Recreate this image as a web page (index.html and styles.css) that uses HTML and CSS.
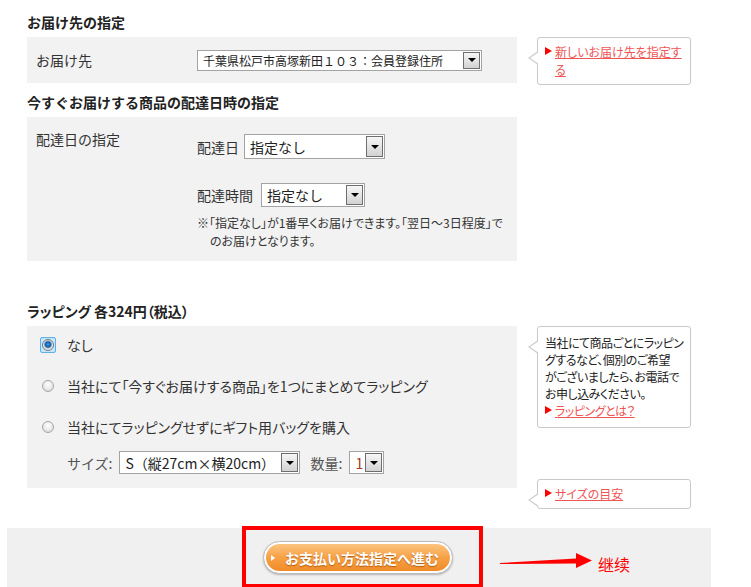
FILE: index.html
```html
<!DOCTYPE html>
<html lang="ja">
<head>
    <meta charset="UTF-8">
    <meta name="viewport" content="width=device-width, initial-scale=1.0">
    <title>お届け先の指定</title>
    <link rel="stylesheet" href="styles.css">
</head>
<body>
    <div class="page">
        <h2 class="ttl">お届け先の指定</h2>
        <div class="row">
            <div class="box box-addr">
                <div class="lbl">お届け先</div>
                <div class="sel sel-addr"><span class="val">千葉県松戸市高塚新田１０３：会員登録住所</span><span class="btn"></span></div>
            </div>
            <div class="side">
                <div class="tip">
                    <div class="tip-link"><i class="mk"></i><a href="#">新しいお届け先を指定す<br>る</a></div>
                </div>
            </div>
        </div>

        <h2 class="ttl ttl-date">今すぐお届けする商品の配達日時の指定</h2>
        <div class="row">
            <div class="box box-date">
                <div class="lbl">配達日の指定</div>
                <div class="fields">
                    <div class="field">
                        <span class="name">配達日</span>
                        <div class="sel sel-day"><span class="val">指定なし</span><span class="btn"></span></div>
                    </div>
                    <div class="field">
                        <span class="name">配達時間</span>
                        <div class="sel sel-time"><span class="val">指定なし</span><span class="btn"></span></div>
                    </div>
                    <p class="note">※「指定なし」が1番早くお届けできます。「翌日〜3日程度」で<br>のお届けとなります。</p>
                </div>
            </div>
        </div>

        <h2 class="ttl ttl-wrap">ラッピング 各324円（税込）</h2>
        <div class="row">
            <div class="box box-wrap">
                <label class="opt"><span class="mark on"><input type="radio" name="wrap" checked></span>なし</label>
                <label class="opt"><span class="mark"><input type="radio" name="wrap"></span>当社にて「今すぐお届けする商品」を1つにまとめてラッピング</label>
                <label class="opt"><span class="mark"><input type="radio" name="wrap"></span>当社にてラッピングせずにギフト用バッグを購入</label>
                <div class="size-row">
                    <span class="name">サイズ:</span>
                    <div class="sel sel-size"><span class="val">S（縦27cm×横20cm）</span><span class="btn"></span></div>
                    <span class="name name-qty">数量:</span>
                    <div class="sel sel-qty"><span class="val">1</span><span class="btn"></span></div>
                </div>
            </div>
            <div class="side">
                <div class="tip tip-note">
                    当社にて商品ごとにラッピン<br>グするなど、個別のご希望<br>がございましたら、お電話で<br>お申し込みください。
                    <div class="tip-link"><i class="mk"></i><a href="#">ラッピングとは？</a></div>
                </div>
                <div class="tip tip-size">
                    <div class="tip-link"><i class="mk"></i><a href="#">サイズの目安</a></div>
                </div>
            </div>
        </div>
    </div>

    <div class="bar">
        <div class="frame">
            <a href="#" class="go"><span><i class="go-mk"></i>お支払い方法指定へ進む</span></a>
        </div>
        <svg class="arrow" width="96" height="20" viewBox="0 0 96 20">
            <polygon points="2,12 78,7.5 78,2 94,9.5 78,17 78,12.5 2,13" fill="#f00"/>
        </svg>
        <span class="next">继续</span>
    </div>
</body>
</html>
```

FILE: styles.css
```css
body{
    margin:0;
    font-family:"Noto Sans CJK JP", sans-serif;
    font-size:14px;
    color:#333;
    overflow:hidden;
}
a{
    color:#ee5656;
}
.page{
    padding:12px 0 0 27px;
}
.ttl{
    margin:0 0 5px;
    font-size:14px;
    line-height:20px;
    font-weight:bold;
    color:#222;
}
.ttl-date{
    margin-top:7px;
}
.ttl-wrap{
    margin-top:40px;
    font-feature-settings:"palt";
}
.row{
    display:flex;
    align-items:flex-start;
    gap:20px;
}
.box{
    width:490px;
    box-sizing:border-box;
    background:#f2f2f2;
}
.lbl{
    flex:none;
    width:161px;
    line-height:20px;
}

/* select */
.sel{
    display:flex;
    box-sizing:border-box;
    border:1px solid #a3a3a3;
    background:#fff;
    color:#222;
}
.sel .val{
    flex:1;
    display:flex;
    align-items:center;
    padding-left:5px;
    white-space:nowrap;
    overflow:hidden;
}
.sel .btn{
    flex:none;
    width:15px;
    margin:1px;
    border:1px solid #6e6e6e;
    background:linear-gradient(#f6f6f6,#d2d2d2);
    display:flex;
    align-items:center;
    justify-content:center;
}
.sel .btn::after{
    content:"";
    border-left:4px solid transparent;
    border-right:4px solid transparent;
    border-top:4px solid #000;
}
.sel-addr{
    width:285px;
    height:21px;
    font-size:12px;
}
.sel-day{
    width:141px;
    height:25px;
}
.sel-time{
    width:104px;
    height:24px;
    margin-left:3px;
}
.sel-size{
    width:181px;
    height:23px;
}
.sel-qty{
    width:35px;
    height:23px;
}
.sel-qty .val{
    color:#a33a22;
}

/* お届け先 */
.box-addr{
    height:46px;
    display:flex;
    align-items:center;
    padding-left:9px;
}

/* 配達日時 */
.box-date{
    display:flex;
    padding:12px 0 11px 9px;
}
.fields{
    padding-top:5px;
}
.field{
    display:flex;
    align-items:center;
}
.field + .field{
    margin-top:24px;
}
.field .name{
    margin-right:5px;
}
.note{
    margin:7px 0 0;
    padding-left:13px;
    text-indent:-13px;
    font-size:12px;
    line-height:18px;
    font-feature-settings:"palt";
}

/* ラッピング */
.box-wrap{
    padding:9px 0 14px 15px;
}
.opt{
    display:flex;
    align-items:center;
    height:20px;
    font-feature-settings:"palt";
}
.opt + .opt{
    margin-top:21px;
}
.mark{
    display:flex;
    margin-right:13px;
}
.mark.on{
    margin:-2px 11px -2px -2px;
    padding:1px;
    border:1px solid #5eb0ea;
    border-radius:2px;
    background:#c6e5fa;
}
.mark input{
    -webkit-appearance:none;
    appearance:none;
    width:12px;
    height:12px;
    margin:0;
    box-sizing:border-box;
    border:1px solid #a6a6a6;
    border-radius:50%;
    background:radial-gradient(circle at 50% 35%,#fff 0,#e6e6e6 60%,#cfcfcf 100%);
}
.mark input:checked{
    border-color:#6f7a84;
    background:radial-gradient(circle at 50% 45%,#3fa2ee 0,#0d5aa6 2.5px,#7d9fbd 3.5px,#e9e9e9 4.5px);
}
.size-row{
    display:flex;
    align-items:center;
    margin-top:14px;
    padding-left:25px;
    color:#555;
}
.size-row .name{
    margin-right:7px;
}
.size-row .name-qty{
    margin-left:10px;
}

/* 吹き出し */
.side{
    display:flex;
    flex-direction:column;
}
.tip{
    position:relative;
    width:154px;
    box-sizing:border-box;
    padding:5px 7px;
    border:1px solid #c9c9c9;
    border-radius:3px;
    background:#fff;
    font-size:12px;
    line-height:18px;
    color:#222;
    white-space:nowrap;
    font-feature-settings:"palt";
}
.tip::before,.tip::after{
    content:"";
    position:absolute;
    top:13px;
    left:-10px;
    border-top:7px solid transparent;
    border-bottom:7px solid transparent;
    border-right:10px solid #cdcdcd;
}
.tip::after{
    top:14px;
    left:-8px;
    border-top-width:6px;
    border-bottom-width:6px;
    border-right:9px solid #fff;
}
.tip-note{
    padding:7px 7px 8px;
    line-height:17px;
    letter-spacing:-0.5px;
}
.tip-size{
    margin-top:51px;
}
.tip-link{
    display:flex;
    align-items:flex-start;
}
.mk{
    flex:none;
    width:0;
    height:0;
    margin:4px 3px 0 0;
    border-top:4.5px solid transparent;
    border-bottom:4.5px solid transparent;
    border-left:7px solid #f00;
}

/* 下部 */
.bar{
    display:flex;
    align-items:flex-start;
    width:704px;
    height:60px;
    margin:19px 0 0 7px;
    background:#f0f0f0;
}
.frame{
    flex:none;
    width:241px;
    height:62px;
    margin:-2px 0 0 235px;
    box-sizing:border-box;
    padding:11px 0 0 17px;
    border:4px solid #f00;
}
.go{
    display:block;
    width:190px;
    height:33px;
    box-sizing:border-box;
    padding:2px;
    border:1px solid #bcbcbc;
    border-radius:17px;
    background:#fff;
    box-shadow:0 1px 2px rgba(0,0,0,.25);
    text-decoration:none;
}
.go span{
    display:flex;
    align-items:center;
    height:100%;
    padding-left:5px;
    border-radius:15px;
    background:linear-gradient(#fcc47f,#f7a146 50%,#f08b27);
    color:#fff;
    font-size:14px;
    font-weight:bold;
    text-shadow:0 1px 1px rgba(150,70,0,.7);
}
.go-mk{
    width:0;
    height:0;
    margin-right:10px;
    border-top:3px solid transparent;
    border-bottom:3px solid transparent;
    border-left:4px solid #fff;
}
.arrow{
    flex:none;
    margin:23px 0 0 15px;
}
.next{
    margin:26px 0 0 4px;
    font-family:"Noto Sans CJK SC", sans-serif;
    font-size:16px;
    line-height:20px;
    color:#f00;
}
```
